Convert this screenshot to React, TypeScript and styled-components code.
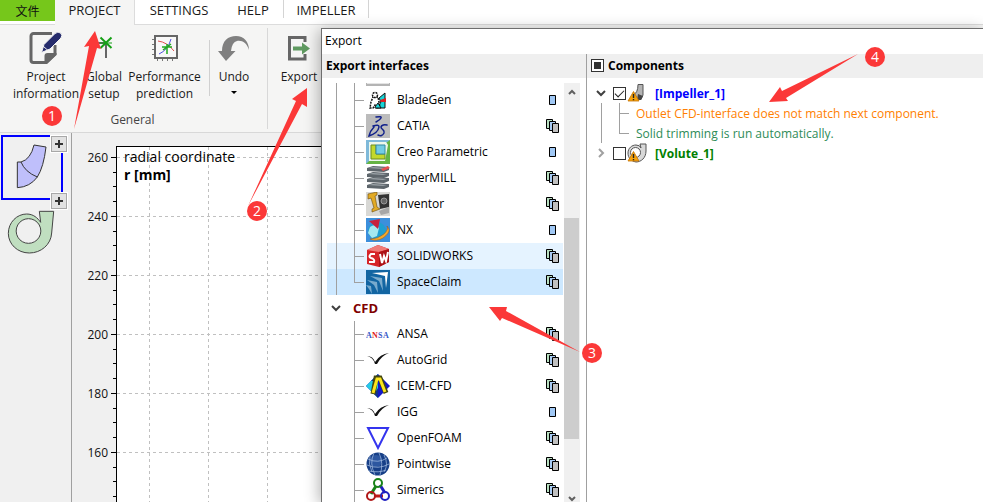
import React, { useEffect, useRef, useState } from "react";
import styled, { createGlobalStyle, css } from "styled-components";

const GlobalStyle = createGlobalStyle`
  *, *::before, *::after { box-sizing: border-box; }
  html, body { margin: 0; height: 100%; }
  body {
    font-family: "Open Sans", "Noto Sans", "Noto Sans CJK SC", sans-serif;
    font-size: 12px;
    color: #1a1a1a;
    background: #f0f0f0;
  }
  button { font: inherit; color: inherit; background: none; border: 0; padding: 0; margin: 0; }
  svg { display: block; }
`;

const Screen = styled.div`
  position: relative;
  display: flex;
  flex-direction: column;
  height: 100vh;
  overflow: hidden;
`;

/* ---------- ribbon ---------- */

const TabBar = styled.nav`
  display: flex;
  height: 25px;
  flex: none;
  background: linear-gradient(#dcdcdc, #dcdcdc) 0 100% / 100% 1px no-repeat #fff;
`;

const FileTab = styled.button`
  width: 55px;
  height: 21px;
  background: #76c71b;
  color: #111;
`;

const Tab = styled.button<{ $active?: boolean; $width: number }>`
  width: ${(p) => p.$width}px;
  height: ${(p) => (p.$active ? 25 : 21)}px;
  padding-bottom: ${(p) => (p.$active ? 4 : 0)}px;
  font-size: 13px;
  line-height: 21px;
  ${(p) => p.$active && css`
    background: #f5f5f4;
    border-right: 1px solid #dcdcdc;
  `}
`;

const TabDivider = styled.span`
  width: 1px;
  height: 18px;
  background: #d4d4d4;
`;

const Ribbon = styled.section`
  display: flex;
  flex: none;
  height: 108px;
  padding-top: 3px;
  background: #f5f5f4;
  border-bottom: 1px solid #d8d8d8;
`;

const RibbonGroup = styled.div<{ $last?: boolean }>`
  display: flex;
  flex-direction: column;
  padding-left: ${(p) => (p.$last ? 5 : 8)}px;
  margin-bottom: 3px;
  width: ${(p) => (p.$last ? "auto" : "268px")};
  border-right: ${(p) => (p.$last ? 0 : 1)}px solid #d8d8d8;
`;

const GroupTools = styled.div`
  display: flex;
  height: 84px;
`;

const GroupName = styled.div`
  padding-right: 10px;
  font-size: 12px;
  line-height: 18px;
  text-align: center;
  color: #444;
`;

const ToolButton = styled.button<{ $width: number }>`
  display: flex;
  flex-direction: column;
  align-items: center;
  width: ${(p) => p.$width}px;
  font-size: 12px;
  line-height: 17px;
  white-space: pre;
  text-align: center;
`;

const ToolIcon = styled.span`
  display: flex;
  align-items: center;
  justify-content: center;
  height: 40px;
`;

const ToolDivider = styled.span`
  width: 1px;
  height: 56px;
  margin: 12px 0 0 4px;
  background: #d0d0d0;
`;

const DropMark = styled.span`
  margin-top: 6px;
  border: 3px solid transparent;
  border-top-color: #000;
`;

/* ---------- workspace ---------- */

const Workspace = styled.div`
  display: flex;
  flex: 1;
  min-height: 0;
`;

const PartRail = styled.aside`
  display: flex;
  flex-direction: column;
  gap: 4px;
  flex: none;
  width: 72px;
  padding: 2px 0 0 1px;
  background: #f0f0f0;
  border-right: 1px solid #a0a0a0;
`;

const PartTile = styled.div`
  position: relative;
  width: 62px;
  height: 65px;
  border: 2px solid #0000ff;
`;

const PartButton = styled.button`
  display: block;
`;

const AddButton = styled.button<{ $end?: boolean }>`
  position: absolute;
  right: -6px;
  ${(p) => (p.$end ? "bottom: -11px;" : "top: -1px;")}
  display: grid;
  place-items: center;
  width: 16px;
  height: 16px;
  background: #e2e2e2;
  border: 1px solid #a8a8a8;
  box-shadow: 0 0 0 1px #fff;
`;

const ChartArea = styled.main`
  flex: 1;
  min-width: 0;
  svg { width: 100%; height: 100%; }
`;

/* ---------- export dialog ---------- */

const Dialog = styled.section`
  position: absolute;
  inset: 28px 0 0 321px;
  display: flex;
  flex-direction: column;
  background: #fff;
  color: #000;
  border: solid #6e6e6e;
  border-width: 1px 0 0 1px;
  box-shadow: -2px 2px 14px rgba(0, 0, 0, 0.3);
`;

const DialogTitle = styled.h1`
  flex: none;
  height: 25px;
  margin: 0;
  padding-left: 3px;
  font-size: 12px;
  font-weight: 400;
  line-height: 24px;
`;

const Panes = styled.div`
  display: flex;
  flex: 1;
  min-height: 0;
`;

const InterfacePane = styled.div`
  display: flex;
  flex-direction: column;
  flex: none;
  width: 265px;
  border-right: 1px solid #a0a0a0;
`;

const ComponentPane = styled.div`
  display: flex;
  flex-direction: column;
  flex: 1;
  min-width: 0;
`;

const PaneHeader = styled.h2`
  display: flex;
  align-items: center;
  gap: 4px;
  flex: none;
  height: 24px;
  margin: 0;
  padding: 0 0 1px 4px;
  background: #efefef;
  font-size: 12px;
  font-weight: 700;
`;

const ListFrame = styled.div`
  display: flex;
  flex: 1;
  min-height: 0;
  gap: 1px;
  padding: 5px 6px 0 5px;
`;

const InterfaceTree = styled.div`
  display: flex;
  flex-direction: column;
  flex: 1;
  min-width: 0;
  overflow: hidden;
`;

const InterfaceRow = styled.button<{ $state?: "hover" | "selected" }>`
  display: grid;
  grid-template-columns: 18px 21px 24px 1fr 13px;
  align-items: center;
  flex: none;
  height: 26px;
  padding-right: 4px;
  text-align: left;
  background: ${(p) => (p.$state === "selected" ? "#cde8ff" : p.$state === "hover" ? "#e5f3ff" : "#fff")};
`;

const ClippedRow = styled.div`
  display: grid;
  grid-template-columns: 18px 21px 24px;
  flex: none;
  height: 4px;
`;

const ClippedIcon = styled.span`
  height: 3px;
  background: #e4e4e4;
  border: solid #b4b4b4;
  border-width: 0 1px 2px;
`;

const GroupRow = styled.button`
  display: flex;
  align-items: center;
  gap: 12px;
  flex: none;
  height: 26px;
  padding-left: 4px;
  color: #800000;
  font-size: 13px;
  font-weight: 700;
`;

const Guide = styled.span<{ $line?: boolean; $branch?: boolean; $last?: boolean }>`
  align-self: stretch;
  background-image:
    linear-gradient(#a0a0a0, #a0a0a0),
    linear-gradient(#a0a0a0, #a0a0a0);
  background-repeat: no-repeat;
  background-position: 9px 0, 9px 50%;
  background-size:
    ${(p) => (p.$line ? `1px ${p.$last ? "50%" : "100%"}` : "0 0")},
    ${(p) => (p.$branch ? "10px 1px" : "0 0")};
`;

const RowName = styled.span`
  padding: 0 0 2px 7px;
  white-space: nowrap;
`;

const ScrollBar = styled.div`
  display: flex;
  flex-direction: column;
  align-items: center;
  width: 16px;
  padding-top: 6px;
  background: #f0f0f0;
`;

const ScrollTrack = styled.div`
  flex: 1;
  display: flex;
  flex-direction: column;
  width: 100%;
  padding-right: 1px;
`;

const ScrollThumb = styled.div`
  height: 55%;
  margin-top: 123px;
  background: #cdcdcd;
`;

const ComponentTree = styled.div`
  display: flex;
  flex-direction: column;
  padding: 5px 0 0 5px;
`;

const ComponentRow = styled.div`
  display: flex;
  align-items: center;
  height: 20px;
  padding-left: 4px;
`;

const ComponentLabel = styled.label<{ $color: string }>`
  display: flex;
  align-items: center;
  gap: 8px;
  padding-left: 1px;
  color: ${(p) => p.$color};
  font-weight: 700;
`;

const MessageRow = styled.div<{ $color: string }>`
  display: grid;
  grid-template-columns: 18px 26px 1fr;
  align-items: center;
  height: 20px;
  color: ${(p) => p.$color};
  white-space: nowrap;
`;

const CheckBox = styled.input`
  appearance: none;
  display: grid;
  place-items: center;
  flex: none;
  width: 13px;
  height: 13px;
  margin: 0;
  border: 1px solid #333;
  background: #fff;
  &:checked::after {
    content: "";
    width: 9px;
    height: 5px;
    margin-top: -2px;
    border: solid #222;
    border-width: 0 0 1px 1px;
    transform: rotate(-45deg);
  }
  &:indeterminate::after {
    content: "";
    width: 7px;
    height: 7px;
    background: #333;
  }
`;

const Expander = styled.button`
  display: grid;
  place-items: center;
  width: 10px;
  height: 16px;
  margin-right: 7px;
`;

/* ---------- annotations ---------- */

const MarkerLayer = styled.div`
  position: absolute;
  inset: 0;
  pointer-events: none;
  > svg { width: 100%; height: 100%; }
`;

const Marker = styled.span<{ $x: number; $y: number }>`
  position: absolute;
  left: ${(p) => p.$x - 10}px;
  top: ${(p) => p.$y - 10}px;
  width: 20px;
  height: 20px;
  border-radius: 50%;
  background: #fb3838;
  color: #fff;
  font-size: 14px;
  line-height: 19px;
  text-align: center;
`;

/* ---------- icons ---------- */

const Chevron = ({ dir }: { dir: "down" | "right" }) => (
  <svg width="10" height="10" viewBox="0 0 10 10" fill="none" stroke={dir === "down" ? "#404040" : "#a0a0a0"} strokeWidth="2">
    <path d={dir === "down" ? "M1 3l4 4 4-4" : "M3 1l4 4-4 4"} />
  </svg>
);

const ScrollArrow = ({ dir }: { dir: "up" | "down" }) => (
  <svg width="10" height="6" viewBox="0 0 10 6" fill="none" stroke="#606060" strokeWidth="2">
    <path d={dir === "down" ? "M2 1l3 3 3-3" : "M2 5l3-3 3 3"} />
  </svg>
);

const PlusIcon = () => (
  <svg width="8" height="8" viewBox="0 0 8 8" stroke="#333" strokeWidth="2"><path d="M4 0v8M0 4h8" /></svg>
);

const ProjectIcon = () => (
  <svg width="34" height="34" viewBox="0 0 34 34">
    <path d="M23 2.500H4.500a2.500 2.500 0 0 0-2.500 2.500v24a2.500 2.500 0 0 0 2.500 2.500H17L26 23V14" fill="none" stroke="#666" strokeWidth="3" />
    <path d="M15.500 33V25q0-3 3-3H27.500V24L18 33z" fill="#666" />
    <path d="M12.500 21.500l2.500-8L26 2.500q3-2.500 5.500-.5t.500 5L21 18z" fill="#262c6c" stroke="#f5f5f4" strokeWidth="1" />
    <path d="M14 15l5 4.500" stroke="#f5f5f4" strokeWidth="1" />
  </svg>
);

const GlobalIcon = () => (
  <svg width="28" height="28" viewBox="0 0 28 28">
    <path d="M1 9h15M16 9v15" stroke="#666" strokeWidth="2" />
    <path d="M10.500 3.500l11 10.500M21.500 3.500L10.500 14" stroke="#15a015" strokeWidth="2" />
    <path d="M10 9h12" stroke="#15a015" strokeWidth="1" />
  </svg>
);

const PerformanceIcon = () => (
  <svg width="28" height="28" viewBox="0 0 28 28" fill="none">
    <path d="M1 5.500h3M1 10.500h3M1 15.500h3M1 20.500h3M6.500 24v3M11.500 24v3M16.500 24v3M21.500 24v3" stroke="#777" />
    <rect x="4" y="2" width="22" height="22" fill="#f8f8f8" stroke="#666" strokeWidth="2" />
    <path d="M7 7q9 1 16 10" stroke="#e05050" />
    <path d="M20 5q-3 11-12 15" stroke="#5050e0" />
    <path d="M16 10v10M11 13h10M12 16l8-6" stroke="#20a820" strokeWidth="1.500" />
  </svg>
);

const UndoIcon = () => (
  <svg width="32" height="26" viewBox="0 0 32 26">
    <path d="M31 15C29 8 24 5 19 6q-5 1-6 10h4.500L8 26 0 16h4C4 6 10 1 18 1c8 0 13 6 13 14z" fill="#808080" />
  </svg>
);

const ExportIcon = () => (
  <svg width="24" height="26" viewBox="0 0 24 26" fill="none">
    <path d="M18 7V2.500H2.500v21.500H18v-5" stroke="#666" strokeWidth="3" />
    <path d="M6 11.500h9V7.500l8 6-8 6v-4H6z" fill="#5f9a60" />
  </svg>
);

const ImpellerDrawing = () => (
  <svg width="52" height="58" viewBox="9 40 156 174" fill="#bfbffb" stroke="#333" strokeWidth="3">
    <path d="M102 64l36 6q-7 60-26 90-22 30-60 32v-77h11q29-8 39-51z" />
    <path d="M63 115q12 30 49 45" fill="none" />
  </svg>
);

const VoluteDrawing = () => (
  <svg width="58" height="58" viewBox="3 243 174 174" fill="#c0dfc0" stroke="#444" strokeWidth="3">
    <path fillRule="evenodd" d="M118 265h43l-6 65c-2 35-32 60-67 60-36 0-63-27-63-59 0-33 26-58 55-58 20 0 33 12 42 25zM85 287a37 37 0 1 0 1 0z" />
  </svg>
);

const glyphs: Record<string, React.ReactNode> = {
  BladeGen: (
    <>
      <path d="M13 10l6-5v15h-8l4-6z" fill="#18d5d8" stroke="#111" />
      <path d="M14 12l6-2v4h-5z" fill="#e02020" />
      <path d="M7 9h5l1 5 1 5-3 1-2-3-2 3H4l1-6z" fill="#fff" stroke="#111" strokeWidth="1.500" strokeDasharray="2 1" />
      <circle cx="9" cy="7" r="2.500" fill="#fff" stroke="#111" strokeWidth="1.500" strokeDasharray="2 1" />
      <path d="M9 19l3-4 3 5H9z" fill="#18d5d8" stroke="#111" />
    </>
  ),
  CATIA: (
    <>
      <path d="M0 0h24v24H0z" fill="#bcbcbc" />
      <g fill="none" stroke="#10208a" strokeLinecap="round" strokeWidth="1.500">
        <path d="M10 3q6-1 5 1-1 2-5 4" />
        <path d="M7 12q6-2 6 1-1 6-10 9 1-5 5-9" />
        <path d="M21 11q-5-1-6 2c0 3 4 2 3 6q-2 4-6 2" />
      </g>
    </>
  ),
  "Creo Parametric": (
    <>
      <path d="M0 0h24v24H0z" fill="#66b443" />
      <path d="M0 0h24L20 3 3 21l-3 3z" fill="#7fb9d9" />
      <path d="M3 2h17l2 3-3 16H3z" fill="#eef8ec" />
      <path d="M5 5h5v9h9v5H5z" fill="#c2d82c" stroke="#6b8c20" />
      <path d="M10 5h9v9h-9z" fill="#72cce5" stroke="#358aa0" />
    </>
  ),
  hyperMILL: (
    <>
      {[2, 8, 13, 19].map((y) => (
        <g key={y}>
          <path d={`M1 ${y}l6-2 16 1v3l-5 2-17-1z`} fill="#5d656b" />
          <path d={`M2 ${y}l5-1 14 1-4 1z`} fill="#9aa1a6" />
        </g>
      ))}
      <path d="M15 3l7-3 2 2-7 3z" fill="#e64f50" />
    </>
  ),
  Inventor: (
    <>
      <path d="M0 0h24v24H0z" fill="#d8d8d5" />
      <path d="M12 3l11-1v13l-9 2z" fill="#333" />
      <circle cx="18" cy="9" r="3" fill="#666" stroke="#999" />
      <path d="M13 19l10-4v6l-8 2z" fill="#a7a7a7" />
      <path d="M2 2l9-2v3l-2 1 2 11 3 2-8 3v-3l2-1L5 6 2 7z" fill="#e2aa25" stroke="#6c4c0a" strokeWidth=".6" />
    </>
  ),
  NX: (
    <>
      <path d="M0 0h24v24H0z" fill="#3c8fdc" />
      <circle cx="11" cy="13" r="9" fill="#1f9fd0" />
      <path d="M4 9q5-4 9 1l-2 8-5 2-4-5z" fill="#a5e8ee" />
      <path d="M21 8q2 3-3 8-6 5-14 5 6 3 13-1 7-5 6-9z" fill="#f4a829" stroke="#a9570b" strokeWidth=".5" />
      <path d="M3 3l11-2-2 10z" fill="#c7203c" />
    </>
  ),
  SOLIDWORKS: (
    <>
      <path d="M1 6l11-5 11 4v13l-10 5-12-3z" fill="#d62428" />
      <path d="M1 6l11-5 11 4-10 3z" fill="#f07b77" />
      <path d="M13 8l10-3v13l-10 5z" fill="#ad1116" />
      <path d="M9 10H5q-3 3 0 4 4 1 3 4H3" fill="none" stroke="#fff" strokeWidth="2" />
      <path d="M14 10l2 9 2-7 2 5 2-9" fill="none" stroke="#fff" strokeWidth="2" />
    </>
  ),
  SpaceClaim: (
    <>
      <path d="M0 0h24v24H0z" fill="#1265a2" />
      <path d="M6 3l16-1-2 16-1-12z" fill="#fff" />
      <path d="M4 6l12 2 1 13-4-10z" fill="#78aacd" />
      <path d="M1 10l10 2 1 11-4-8zM0 15l5 1 1 8-3-5z" fill="#78aacd" />
    </>
  ),
  ANSA: (
    <g fontFamily="Liberation Serif, serif" fontSize="8" fontWeight="700">
      <text x="0" y="16" fill="#3658c8">A</text>
      <text x="6" y="16" fill="#e02020">N</text>
      <text x="12" y="16" fill="#3658c8">S</text>
      <text x="17" y="16" fill="#3658c8">A</text>
    </g>
  ),
  Check: <path d="M1 8q6 0 8 6 5-8 14-9-8 3-12 11H9Q7 9 1 8z" fill="#111" />,
  "ICEM-CFD": (
    <>
      <path d="M12 0l12 12-12 12L0 12z" fill="#1418c8" />
      <path d="M12 0v24L0 12z" fill="#24cbe5" />
      <path d="M12 0L5 7h7zM12 14l-4 6 4 4z" fill="#16328e" />
      <path d="M7 20L10 4h4l6 15" fill="none" stroke="#444810" strokeWidth="5" />
      <path d="M7 19l4-14h3l5 13" fill="none" stroke="#fce51c" strokeWidth="3" />
    </>
  ),
  OpenFOAM: <path d="M2 2h20L12 22z" fill="none" stroke="#3434ee" strokeWidth="2" />,
  Pointwise: (
    <>
      <circle cx="12" cy="12" r="11.500" fill="#173f87" />
      <circle cx="10" cy="9" r="6" fill="#3c68b0" opacity=".6" />
      <g fill="none" stroke="#a9c2e5" strokeWidth=".7">
        <path d="M2 7q10 5 19-1M1 13q11 5 22-1M3 19q10 2 17-1M8 1q-5 10 1 22M13 1q5 10 1 22M4 4q-2 8 2 16M18 3q5 9 0 17" />
      </g>
    </>
  ),
  Simerics: (
    <g fill="none" strokeWidth="2">
      <path d="M10 8l-5 8" stroke="#188318" strokeWidth="3" />
      <path d="M14 7l5 8" stroke="#2020c0" strokeWidth="3" />
      <path d="M9 18h8" stroke="#c01818" strokeWidth="3" />
      <circle cx="12" cy="5" r="4" stroke="#188318" />
      <circle cx="5" cy="18" r="4" stroke="#b01818" />
      <circle cx="19" cy="18" r="4" stroke="#2020c0" />
    </g>
  ),
};

const ProductIcon = ({ name }: { name: string }) => (
  <svg width="24" height="24" viewBox="0 0 24 24">{glyphs[name]}</svg>
);

const SheetIcon = ({ multi }: { multi: boolean }) => (
  <svg width="13" height="14" viewBox="0 0 13 14" stroke="#000">
    {multi ? (
      <>
        <path d="M.5.500h6v9h-6z" fill="#b8dfc0" />
        <path d="M3.500 2.500h6v9h-6z" fill="#a8ccf5" />
        <path d="M6.500 4.500h6v9h-6z" fill="#c0c0c0" />
      </>
    ) : (
      <path d="M3.500 2.500h6v9h-6z" fill="#a0c8f5" />
    )}
  </svg>
);

const Warning = () => (
  <>
    <path d="M6.500 8.500L12 18H1z" fill="#f5a30c" stroke="#c87400" strokeWidth=".8" />
    <path d="M6.500 11v4M6.500 16v1.200" stroke="#222" strokeWidth="1.400" />
  </>
);

const ImpellerIcon = () => (
  <svg width="20" height="20" viewBox="0 0 20 20">
    <path d="M11 1.500h5V12l-2 4.500H6V12q5-2 5-10.500z" fill="#b4b4b4" stroke="#555" />
    <path d="M11 11l5 2-2 4h-4z" fill="#444" />
    <Warning />
  </svg>
);

const VoluteIcon = () => (
  <svg width="20" height="20" viewBox="0 0 20 20" stroke="#555">
    <path d="M13 1h6v7c0 7-5 11-10 11-5-1-8-4-8-9s4-8 8-8q4 0 5 3z" fill="#d8d8d8" />
    <circle cx="8.500" cy="9.500" r="5" fill="#fff" />
    <Warning />
  </svg>
);

/* ---------- data ---------- */

type Entry = { name: string; icon?: string; multi: boolean };

const cad: Entry[] = [
  { name: "BladeGen", multi: false },
  { name: "CATIA", multi: true },
  { name: "Creo Parametric", multi: false },
  { name: "hyperMILL", multi: true },
  { name: "Inventor", multi: true },
  { name: "NX", multi: false },
  { name: "SOLIDWORKS", multi: true },
  { name: "SpaceClaim", multi: true },
];

const cfd: Entry[] = [
  { name: "ANSA", multi: true },
  { name: "AutoGrid", icon: "Check", multi: true },
  { name: "ICEM-CFD", multi: true },
  { name: "IGG", icon: "Check", multi: false },
  { name: "OpenFOAM", multi: true },
  { name: "Pointwise", multi: true },
  { name: "Simerics", multi: true },
];

const ticks = [260, 240, 220, 200, 180, 160];
const arrows = [
  "95,31 84,47 89,46 74,129 97,48 101,49",
  "307,88 292,99 296,101 248,206 302,104 307,107",
  "489,307 507,307 506,311 580,352 502,318 500,321",
  "769,102 780,87 782,91 858,54 786,98 788,101",
];
const markers = [[52, 116], [257, 211], [592, 353], [875, 57]];

const Chart = () => (
  <svg role="img" aria-label="Meridional contour">
    <rect x="44" y="13" width="100%" height="100%" fill="#fff" />
    <g stroke="#c0c0c0" strokeDasharray="3 3" shapeRendering="crispEdges">
      {[77, 136, 195, 254].map((x) => <line key={x} x1={x + 0.5} x2={x + 0.5} y1="14" y2="100%" />)}
      {ticks.map((t, i) => <line key={t} x1="45" x2="100%" y1={24.5 + i * 59} y2={24.5 + i * 59} />)}
    </g>
    <g stroke="#000" shapeRendering="crispEdges">
      <path d="M44.500 13.500V2000M44 13.500H2000" />
      {ticks.map((t, i) => (
        <path key={t} d={`M39 ${24.5 + i * 59}h5M41 ${39.5 + i * 59}h3M41 ${53.5 + i * 59}h3M41 ${68.5 + i * 59}h3`} />
      ))}
    </g>
    <g fontSize="12" textAnchor="end" fill="#111">
      {ticks.map((t, i) => <text key={t} x="36" y={29 + i * 59}>{t}</text>)}
    </g>
    <g fontSize="14" fill="#000">
      <text x="52" y="29">radial coordinate</text>
      <text x="52" y="47" fontWeight="700">r [mm]</text>
    </g>
  </svg>
);

export default function App() {
  const [selected, setSelected] = useState("SpaceClaim");
  const [impeller, setImpeller] = useState(true);
  const [volute, setVolute] = useState(false);
  const allRef = useRef<HTMLInputElement>(null);

  useEffect(() => {
    if (allRef.current) allRef.current.indeterminate = impeller !== volute;
  }, [impeller, volute]);

  const renderRow = (e: Entry, outer: boolean, last: boolean) => (
    <InterfaceRow
      key={e.name}
      $state={selected === e.name ? "selected" : e.name === "SOLIDWORKS" ? "hover" : undefined}
      onClick={() => setSelected(e.name)}
    >
      <Guide $line={outer} />
      <Guide $line $branch $last={last} />
      <ProductIcon name={e.icon ?? e.name} />
      <RowName>{e.name}</RowName>
      <SheetIcon multi={e.multi} />
    </InterfaceRow>
  );

  return (
    <Screen>
      <GlobalStyle />
      <TabBar>
        <FileTab>文件</FileTab>
        <Tab $active $width={80}>PROJECT</Tab>
        <Tab $width={88}>SETTINGS</Tab>
        <Tab $width={60}>HELP</Tab>
        <TabDivider />
        <Tab $width={84}>IMPELLER</Tab>
        <TabDivider />
      </TabBar>
      <Ribbon>
        <RibbonGroup>
          <GroupTools>
            <ToolButton $width={76}>
              <ToolIcon><ProjectIcon /></ToolIcon>{"Project\ninformation"}
            </ToolButton>
            <ToolButton $width={40}>
              <ToolIcon><GlobalIcon /></ToolIcon>{"Global\nsetup"}
            </ToolButton>
            <ToolButton $width={81}>
              <ToolIcon><PerformanceIcon /></ToolIcon>{"Performance\nprediction"}
            </ToolButton>
            <ToolDivider />
            <ToolButton $width={48}>
              <ToolIcon><UndoIcon /></ToolIcon>Undo<DropMark />
            </ToolButton>
          </GroupTools>
          <GroupName>General</GroupName>
        </RibbonGroup>
        <RibbonGroup $last>
          <GroupTools>
            <ToolButton $width={52}>
              <ToolIcon><ExportIcon /></ToolIcon>Export
            </ToolButton>
          </GroupTools>
        </RibbonGroup>
      </Ribbon>
      <Workspace>
        <PartRail>
          <PartTile>
            <PartButton aria-label="Impeller"><ImpellerDrawing /></PartButton>
            <AddButton aria-label="Add before"><PlusIcon /></AddButton>
            <AddButton $end aria-label="Add after"><PlusIcon /></AddButton>
          </PartTile>
          <PartButton aria-label="Volute"><VoluteDrawing /></PartButton>
        </PartRail>
        <ChartArea><Chart /></ChartArea>
      </Workspace>

      <Dialog role="dialog" aria-labelledby="export-title">
        <DialogTitle id="export-title">Export</DialogTitle>
        <Panes>
          <InterfacePane>
            <PaneHeader>Export interfaces</PaneHeader>
            <ListFrame>
              <InterfaceTree>
                <ClippedRow><Guide $line /><Guide $line /><ClippedIcon /></ClippedRow>
                {cad.map((e, i) => renderRow(e, true, i === cad.length - 1))}
                <GroupRow><Chevron dir="down" />CFD</GroupRow>
                {cfd.map((e) => renderRow(e, false, false))}
              </InterfaceTree>
              <ScrollBar>
                <ScrollArrow dir="up" />
                <ScrollTrack><ScrollThumb /></ScrollTrack>
                <ScrollArrow dir="down" />
              </ScrollBar>
            </ListFrame>
          </InterfacePane>
          <ComponentPane>
            <PaneHeader>
              <CheckBox
                ref={allRef}
                id="all"
                type="checkbox"
                checked={impeller && volute}
                onChange={(e) => { setImpeller(e.target.checked); setVolute(e.target.checked); }}
              />
              <label htmlFor="all">Components</label>
            </PaneHeader>
            <ComponentTree>
              <ComponentRow>
                <Expander aria-label="Collapse"><Chevron dir="down" /></Expander>
                <CheckBox id="imp" type="checkbox" checked={impeller} onChange={(e) => setImpeller(e.target.checked)} />
                <ComponentLabel htmlFor="imp" $color="#0000ff"><ImpellerIcon />[Impeller_1]</ComponentLabel>
              </ComponentRow>
              <MessageRow $color="#ff8000"><Guide $line /><Guide $line $branch />Outlet CFD-interface does not match next component.</MessageRow>
              <MessageRow $color="#2e8b57"><Guide $line /><Guide $line $branch $last />Solid trimming is run automatically.</MessageRow>
              <ComponentRow>
                <Expander aria-label="Expand"><Chevron dir="right" /></Expander>
                <CheckBox id="vol" type="checkbox" checked={volute} onChange={(e) => setVolute(e.target.checked)} />
                <ComponentLabel htmlFor="vol" $color="#008000"><VoluteIcon />[Volute_1]</ComponentLabel>
              </ComponentRow>
            </ComponentTree>
          </ComponentPane>
        </Panes>
      </Dialog>

      <MarkerLayer>
        <svg fill="#fb3838">{arrows.map((a) => <polygon key={a} points={a} />)}</svg>
        {markers.map(([x, y], i) => <Marker key={i} $x={x} $y={y}>{i + 1}</Marker>)}
      </MarkerLayer>
    </Screen>
  );
}
